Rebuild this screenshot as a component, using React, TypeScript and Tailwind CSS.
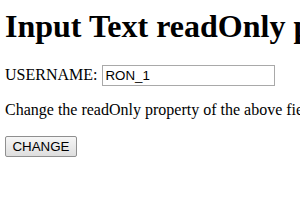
export default function App() {
  return (
    <div className="w-[300px] h-[210px] overflow-hidden bg-white pl-[5px] pt-[8px] text-black" style={{ fontFamily: '"Liberation Serif", serif' }}>
      <h1 className="text-[32px] font-bold leading-[37px] whitespace-nowrap">Input Text readOnly property</h1>
      <div className="mt-[20px] flex items-center h-[21px] whitespace-nowrap">
        <span className="text-[16px] leading-[18px] mt-[-1px]">USERNAME:</span>
        <div className="ml-[5px] w-[173px] h-[21px] border border-[#a9a9a9] px-[2px] flex items-center text-[13.33px] leading-none" style={{ fontFamily: '"Liberation Sans", Arial, sans-serif' }}>
          RON_1
        </div>
      </div>
      <p className="mt-[15px] text-[16px] leading-[18px] whitespace-nowrap">Change the readOnly property of the above field.</p>
      <div className="mt-[17px]">
        <button className="w-[72px] h-[21px] border border-[#8f8f8f] rounded-[2px] bg-gradient-to-b from-[#f6f6f6] to-[#dedede] text-[13.33px] leading-none flex items-center justify-center" style={{ fontFamily: '"Liberation Sans", Arial, sans-serif' }}>
          CHANGE
        </button>
      </div>
    </div>
  );
}
